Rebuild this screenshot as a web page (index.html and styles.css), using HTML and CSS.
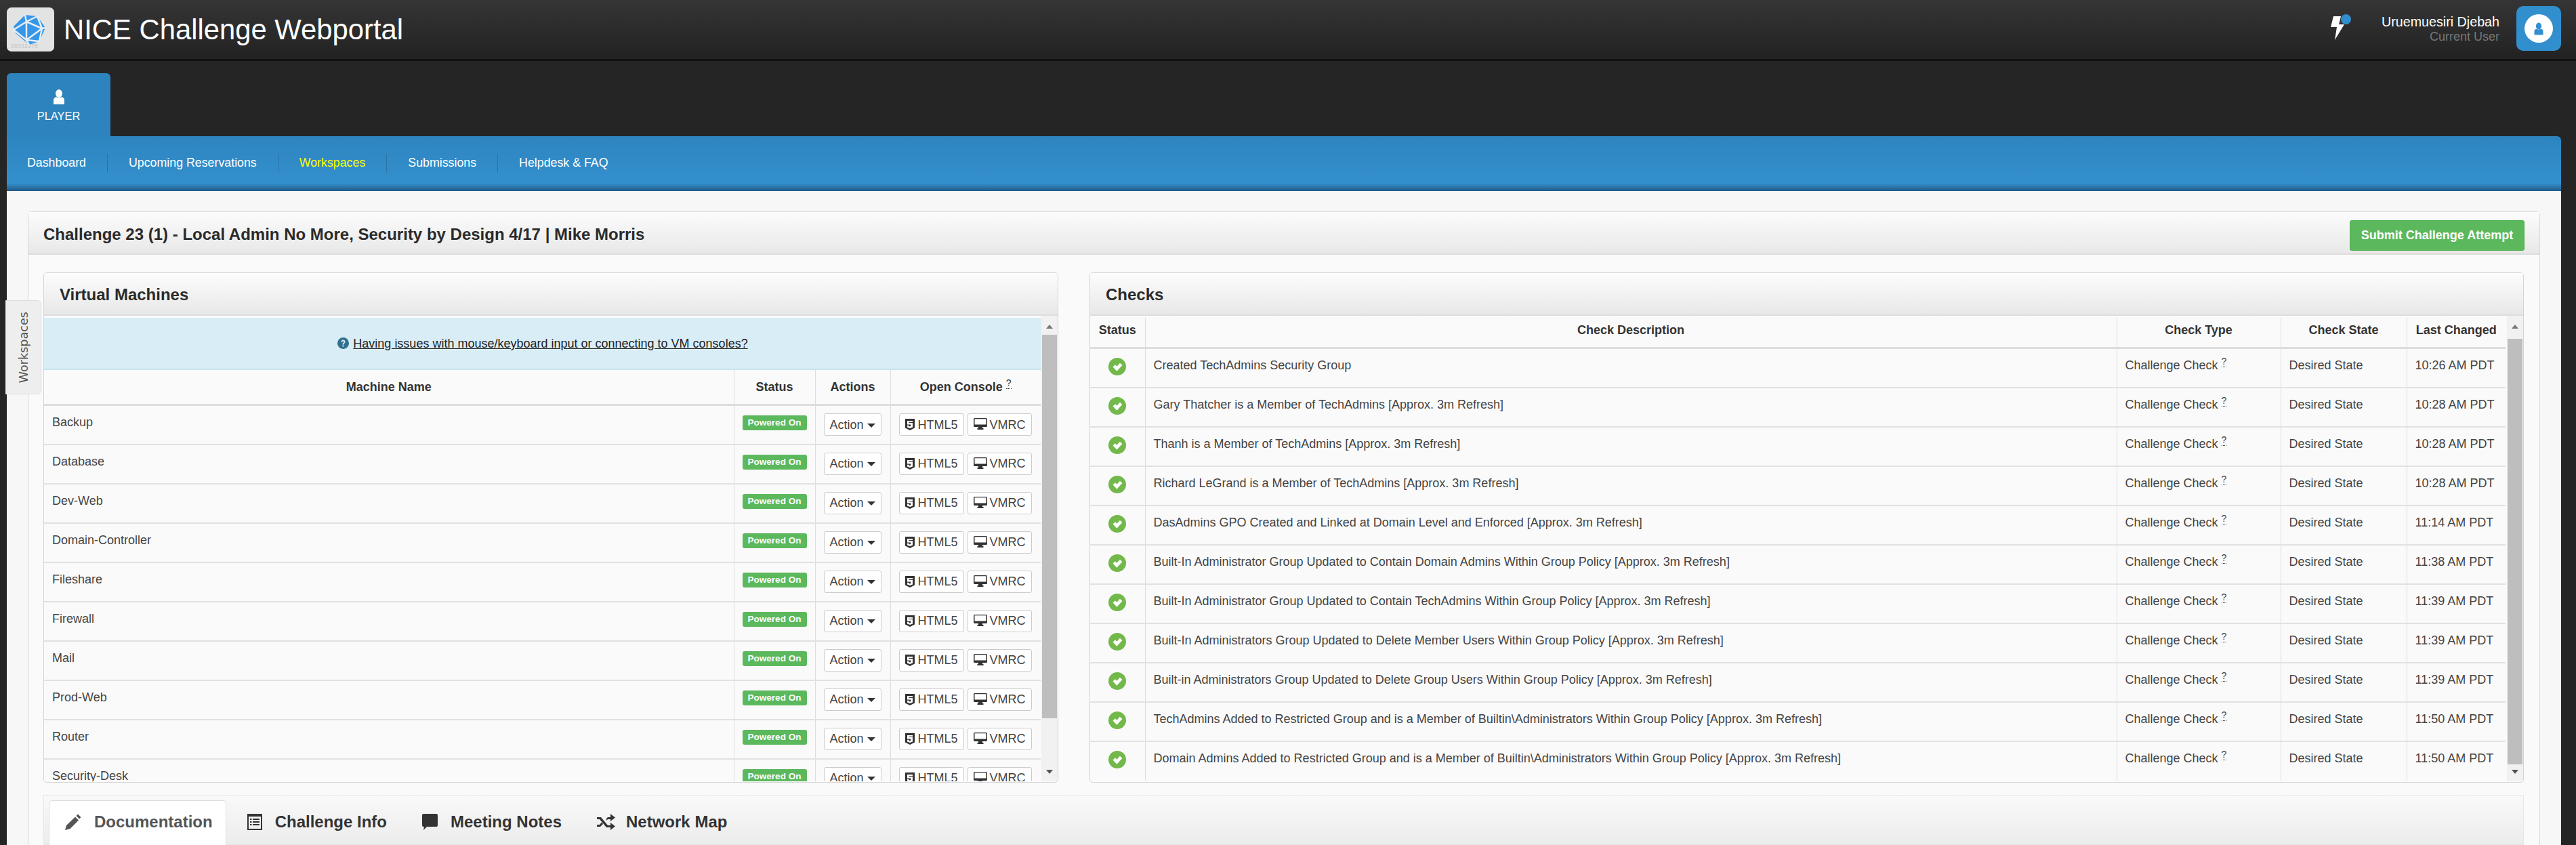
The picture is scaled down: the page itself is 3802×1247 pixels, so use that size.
FILE: index.html
```html
<!DOCTYPE html>
<html>
<head>
<meta charset="utf-8" />
<title>NICE Challenge Webportal</title>
<link rel="stylesheet" href="styles.css">
</head>
<body>
<svg class="sprite" width="0" height="0">
  <symbol id="i-user" viewBox="0 0 22 22"><ellipse cx="11" cy="6" rx="5" ry="6"/><path d="M7 11c1 1.500 7 1.500 8 0 3 1 4 2.500 4 5v5c0 .6-.4 1-1 1H4c-.6 0-1-.4-1-1v-5c0-2.500 1-4 4-5z"/></symbol>
  <symbol id="i-html5" viewBox="0 0 14 17"><path fill-rule="evenodd" d="M0 0h14v13.500L7 17l-7-3.500zM3 3v5.500h5.200v2.300L7 11.400l-1.600-.6V9.700H3v2.700l4 1.700 4-1.700V6H5.400V5H11V3z"/></symbol>
  <symbol id="i-screen" viewBox="0 0 20 17"><path fill-rule="evenodd" d="M1.500 0h17A1.500 1.500 0 0 1 20 1.500v10a1.500 1.500 0 0 1-1.500 1.500H13v2h1.500v2h-9v-2H7v-2H1.500A1.500 1.500 0 0 1 0 11.500v-10A1.500 1.500 0 0 1 1.500 0zM1.500 1.300V9.500h17V1.300z"/></symbol>
  <symbol id="i-check" viewBox="0 0 26 26"><circle cx="13" cy="13" r="13" fill="#72b84a"/><path d="M6.500 13.500l3.500-3.300 2.400 2.500 4.500-5 3.500 3.200-8 8.800z" fill="#fff"/></symbol>
</svg>

<header class="topbar">
  <svg class="logo" viewBox="0 0 70 65">
    <rect width="70" height="65" rx="7" fill="#e2e4e3"/>
    <text class="logo-noise" x="6" y="60">29332278</text>
    <path d="M27 11l18 2 12 17-9 20-15 5-20-17-3-10z" fill="#3597ea"/>
    <path d="M29 21V48L52 31zM29 21L27 11M29 21L45 13M29 21L10 33M29 48L10 33M29 48L33 55M29 48L48 50M52 31L57 30M52 31L45 13M52 31L48 50" stroke="#e8eef3" stroke-width="2.500" fill="none"/>
  </svg>
  <h1 class="brand">NICE Challenge Webportal</h1>
  <div class="top-right">
    <div class="bolt">
      <svg viewBox="0 0 20 35" width="20" height="35"><path d="M4 0h11l-3 12h8L6 35l3-19H0z" fill="#fff"/></svg>
      <span class="bolt-dot"></span>
    </div>
    <div class="who">
      <div class="who-name">Uruemuesiri Djebah</div>
      <div class="who-role">Current User</div>
    </div>
    <div class="avatar"><span class="avatar-face"><svg width="18" height="19" fill="#328fce"><use href="#i-user"/></svg></span></div>
  </div>
</header>

<div class="role-tabs">
  <a class="role-tab">
    <svg width="22" height="22" fill="#fff"><use href="#i-user"/></svg>
    <span>PLAYER</span>
  </a>
</div>

<nav class="subnav">
  <a>Dashboard</a>
  <a>Upcoming Reservations</a>
  <a class="current">Workspaces</a>
  <a>Submissions</a>
  <a>Helpdesk &amp; FAQ</a>
</nav>

<main class="content">
  <div class="side-tab"><span>Workspaces</span></div>

  <section class="main-panel">
    <div class="main-head">
      <h2>Challenge 23 (1) - Local Admin No More, Security by Design 4/17 | Mike Morris</h2>
      <a class="btn-submit">Submit Challenge Attempt</a>
    </div>
    <div class="main-body">
      <div class="panels">
        <section class="panel">
          <h3 class="panel-head">Virtual Machines</h3>
          <div class="panel-body">
            <div class="scroll-area">
              <div class="vm-alert">
                <svg width="17" height="17" viewBox="0 0 17 17"><circle cx="8.500" cy="8.500" r="8.500" fill="#31708f"/><path d="M5.500 6.500c0-4 6-4 6 0 0 2-2 2-2 4H7.500c0-2.500 2-2.500 2-4 0-1.300-2-1.300-2 0zM7.500 11.500h2v2h-2z" fill="#d9edf7"/></svg>
                <a>Having issues with mouse/keyboard input or connecting to VM consoles?</a>
              </div>
              <table class="grid vm-grid">
                <colgroup><col class="c-name"><col class="c-status"><col class="c-actions"><col class="c-console"></colgroup>
                <thead><tr><th>Machine Name</th><th>Status</th><th>Actions</th><th>Open Console <sup class="hint">?</sup></th></tr></thead>
                <tbody>
                  <tr><td>Backup</td><td><span class="badge">Powered On</span></td><td><a class="btn">Action <i class="caret"></i></a></td><td><div class="btns"><a class="btn"><svg class="ic-h" width="14" height="17" fill="#333"><use href="#i-html5"/></svg>HTML5</a><a class="btn"><svg class="ic-s" width="20" height="17" fill="#333"><use href="#i-screen"/></svg>VMRC</a></div></td></tr>
                  <tr><td>Database</td><td><span class="badge">Powered On</span></td><td><a class="btn">Action <i class="caret"></i></a></td><td><div class="btns"><a class="btn"><svg class="ic-h" width="14" height="17" fill="#333"><use href="#i-html5"/></svg>HTML5</a><a class="btn"><svg class="ic-s" width="20" height="17" fill="#333"><use href="#i-screen"/></svg>VMRC</a></div></td></tr>
                  <tr><td>Dev-Web</td><td><span class="badge">Powered On</span></td><td><a class="btn">Action <i class="caret"></i></a></td><td><div class="btns"><a class="btn"><svg class="ic-h" width="14" height="17" fill="#333"><use href="#i-html5"/></svg>HTML5</a><a class="btn"><svg class="ic-s" width="20" height="17" fill="#333"><use href="#i-screen"/></svg>VMRC</a></div></td></tr>
                  <tr><td>Domain-Controller</td><td><span class="badge">Powered On</span></td><td><a class="btn">Action <i class="caret"></i></a></td><td><div class="btns"><a class="btn"><svg class="ic-h" width="14" height="17" fill="#333"><use href="#i-html5"/></svg>HTML5</a><a class="btn"><svg class="ic-s" width="20" height="17" fill="#333"><use href="#i-screen"/></svg>VMRC</a></div></td></tr>
                  <tr><td>Fileshare</td><td><span class="badge">Powered On</span></td><td><a class="btn">Action <i class="caret"></i></a></td><td><div class="btns"><a class="btn"><svg class="ic-h" width="14" height="17" fill="#333"><use href="#i-html5"/></svg>HTML5</a><a class="btn"><svg class="ic-s" width="20" height="17" fill="#333"><use href="#i-screen"/></svg>VMRC</a></div></td></tr>
                  <tr><td>Firewall</td><td><span class="badge">Powered On</span></td><td><a class="btn">Action <i class="caret"></i></a></td><td><div class="btns"><a class="btn"><svg class="ic-h" width="14" height="17" fill="#333"><use href="#i-html5"/></svg>HTML5</a><a class="btn"><svg class="ic-s" width="20" height="17" fill="#333"><use href="#i-screen"/></svg>VMRC</a></div></td></tr>
                  <tr><td>Mail</td><td><span class="badge">Powered On</span></td><td><a class="btn">Action <i class="caret"></i></a></td><td><div class="btns"><a class="btn"><svg class="ic-h" width="14" height="17" fill="#333"><use href="#i-html5"/></svg>HTML5</a><a class="btn"><svg class="ic-s" width="20" height="17" fill="#333"><use href="#i-screen"/></svg>VMRC</a></div></td></tr>
                  <tr><td>Prod-Web</td><td><span class="badge">Powered On</span></td><td><a class="btn">Action <i class="caret"></i></a></td><td><div class="btns"><a class="btn"><svg class="ic-h" width="14" height="17" fill="#333"><use href="#i-html5"/></svg>HTML5</a><a class="btn"><svg class="ic-s" width="20" height="17" fill="#333"><use href="#i-screen"/></svg>VMRC</a></div></td></tr>
                  <tr><td>Router</td><td><span class="badge">Powered On</span></td><td><a class="btn">Action <i class="caret"></i></a></td><td><div class="btns"><a class="btn"><svg class="ic-h" width="14" height="17" fill="#333"><use href="#i-html5"/></svg>HTML5</a><a class="btn"><svg class="ic-s" width="20" height="17" fill="#333"><use href="#i-screen"/></svg>VMRC</a></div></td></tr>
                  <tr><td>Security-Desk</td><td><span class="badge">Powered On</span></td><td><a class="btn">Action <i class="caret"></i></a></td><td><div class="btns"><a class="btn"><svg class="ic-h" width="14" height="17" fill="#333"><use href="#i-html5"/></svg>HTML5</a><a class="btn"><svg class="ic-s" width="20" height="17" fill="#333"><use href="#i-screen"/></svg>VMRC</a></div></td></tr>
                </tbody>
              </table>
            </div>
            <div class="scrollbar vm-bar"><i class="arrow-up"></i><b class="thumb"></b><i class="arrow-down"></i></div>
          </div>
        </section>

        <section class="panel">
          <h3 class="panel-head">Checks</h3>
          <div class="panel-body">
            <div class="scroll-area">
              <table class="grid check-grid">
                <colgroup><col class="k-status"><col class="k-desc"><col class="k-type"><col class="k-state"><col class="k-time"></colgroup>
                <thead><tr><th>Status</th><th>Check Description</th><th>Check Type</th><th>Check State</th><th>Last Changed</th></tr></thead>
                <tbody>
                  <tr><td class="ok"><svg width="26" height="26"><use href="#i-check"/></svg></td><td>Created TechAdmins Security Group</td><td>Challenge Check <sup class="hint">?</sup></td><td>Desired State</td><td>10:26 AM PDT</td></tr>
                  <tr><td class="ok"><svg width="26" height="26"><use href="#i-check"/></svg></td><td>Gary Thatcher is a Member of TechAdmins [Approx. 3m Refresh]</td><td>Challenge Check <sup class="hint">?</sup></td><td>Desired State</td><td>10:28 AM PDT</td></tr>
                  <tr><td class="ok"><svg width="26" height="26"><use href="#i-check"/></svg></td><td>Thanh is a Member of TechAdmins [Approx. 3m Refresh]</td><td>Challenge Check <sup class="hint">?</sup></td><td>Desired State</td><td>10:28 AM PDT</td></tr>
                  <tr><td class="ok"><svg width="26" height="26"><use href="#i-check"/></svg></td><td>Richard LeGrand is a Member of TechAdmins [Approx. 3m Refresh]</td><td>Challenge Check <sup class="hint">?</sup></td><td>Desired State</td><td>10:28 AM PDT</td></tr>
                  <tr><td class="ok"><svg width="26" height="26"><use href="#i-check"/></svg></td><td>DasAdmins GPO Created and Linked at Domain Level and Enforced [Approx. 3m Refresh]</td><td>Challenge Check <sup class="hint">?</sup></td><td>Desired State</td><td>11:14 AM PDT</td></tr>
                  <tr><td class="ok"><svg width="26" height="26"><use href="#i-check"/></svg></td><td>Built-In Administrator Group Updated to Contain Domain Admins Within Group Policy [Approx. 3m Refresh]</td><td>Challenge Check <sup class="hint">?</sup></td><td>Desired State</td><td>11:38 AM PDT</td></tr>
                  <tr><td class="ok"><svg width="26" height="26"><use href="#i-check"/></svg></td><td>Built-In Administrator Group Updated to Contain TechAdmins Within Group Policy [Approx. 3m Refresh]</td><td>Challenge Check <sup class="hint">?</sup></td><td>Desired State</td><td>11:39 AM PDT</td></tr>
                  <tr><td class="ok"><svg width="26" height="26"><use href="#i-check"/></svg></td><td>Built-In Administrators Group Updated to Delete Member Users Within Group Policy [Approx. 3m Refresh]</td><td>Challenge Check <sup class="hint">?</sup></td><td>Desired State</td><td>11:39 AM PDT</td></tr>
                  <tr><td class="ok"><svg width="26" height="26"><use href="#i-check"/></svg></td><td>Built-in Administrators Group Updated to Delete Group Users Within Group Policy [Approx. 3m Refresh]</td><td>Challenge Check <sup class="hint">?</sup></td><td>Desired State</td><td>11:39 AM PDT</td></tr>
                  <tr><td class="ok"><svg width="26" height="26"><use href="#i-check"/></svg></td><td>TechAdmins Added to Restricted Group and is a Member of Builtin\Administrators Within Group Policy [Approx. 3m Refresh]</td><td>Challenge Check <sup class="hint">?</sup></td><td>Desired State</td><td>11:50 AM PDT</td></tr>
                  <tr><td class="ok"><svg width="26" height="26"><use href="#i-check"/></svg></td><td>Domain Admins Added to Restricted Group and is a Member of Builtin\Administrators Within Group Policy [Approx. 3m Refresh]</td><td>Challenge Check <sup class="hint">?</sup></td><td>Desired State</td><td>11:50 AM PDT</td></tr>
                </tbody>
              </table>
            </div>
            <div class="scrollbar check-bar"><i class="arrow-up"></i><b class="thumb"></b><i class="arrow-down"></i></div>
          </div>
        </section>
      </div>

      <ul class="doc-tabs">
        <li class="active"><svg width="24" height="24" viewBox="0 0 24 24" fill="#555"><path d="M0 24l2-7L15 4.500l5 5L7.500 22zM16.500 3L19 .5l4.500 4.500L21 7.500z"/></svg>Documentation</li>
        <li><svg width="22" height="24" viewBox="0 0 22 24" fill="#333"><path fill-rule="evenodd" d="M0 0h22v24H0zM2 4v18h18V4zM4 7h2.500v2H4zM8 7h10v2H8zM4 11h2.500v2H4zM8 11h10v2H8zM4 15h2.500v2H4zM8 15h10v2H8z"/></svg>Challenge Info</li>
        <li><svg width="23" height="24" viewBox="0 0 23 24" fill="#333"><path d="M2 0h19a2 2 0 0 1 2 2v15a2 2 0 0 1-2 2H7l-5 5 1-5H2a2 2 0 0 1-2-2V2a2 2 0 0 1 2-2z"/></svg>Meeting Notes</li>
        <li><svg class="ic-net" width="27" height="24" viewBox="0 0 27 24" fill="#333"><path d="M0 5h6l10 12h4v-4l7 5.500-7 5.500v-4h-6L4 8H0zM0 16h4l3-3.500 2 2.500-4 4H0zM14 7l2-2h4V0l7 5.500-7 5.500V8h-4l-2 2z"/></svg>Network Map</li>
      </ul>
    </div>
  </section>
</main>
</body>
</html>
```
FILE: styles.css
```css
html, body {
  margin: 0;
  height: 1247px;
  overflow: hidden;
}

body {
  background: #252525;
  color: #333;
  font-family: "Liberation Sans", Arial, sans-serif;
  font-size: 18px;
  line-height: 20px;
}

.sprite {
  position: absolute;
}

a {
  color: inherit;
}

/* top bar */
.topbar {
  display: flex;
  align-items: center;
  height: 87px;
  padding: 0 22px 0 10px;
  background: linear-gradient(#353535, #222);
  border-bottom: 3px solid #111;
}

.logo {
  width: 70px;
  height: 65px;
}

.logo-noise {
  font-size: 9px;
  fill: #c4c6c6;
}

.brand {
  margin: 0 0 0 14px;
  color: #fff;
  font-size: 41.800px;
  font-weight: normal;
  line-height: 50px;
}

.top-right {
  display: flex;
  align-items: center;
  margin-left: auto;
}

.bolt {
  position: relative;
  display: flex;
  margin-right: 55px;
  margin-top: -5px;
}

.bolt-dot {
  position: absolute;
  top: -3px;
  right: -10px;
  width: 15px;
  height: 15px;
  border-radius: 50%;
  background: #328fce;
}

.who {
  text-align: right;
  margin-right: 25px;
  margin-top: -1px;
}

.who-name {
  color: #fff;
  font-size: 19.700px;
  line-height: 22px;
}

.who-role {
  color: #777;
  line-height: 22px;
}

.avatar {
  display: flex;
  align-items: center;
  justify-content: center;
  width: 66px;
  height: 66px;
  border-radius: 10px;
  background: #328fce;
  margin-top: -3px;
}

.avatar-face {
  display: flex;
  align-items: center;
  justify-content: center;
  width: 42px;
  height: 42px;
  border-radius: 50%;
  background: #fff;
}

/* role tabs and sub navigation */
.role-tabs {
  display: flex;
  padding: 18px 22px 0 10px;
}

.role-tab {
  display: flex;
  flex-direction: column;
  align-items: center;
  width: 153px;
  height: 93px;
  box-sizing: border-box;
  padding-top: 24px;
  border-radius: 6px 6px 0 0;
  background: #2c83bd;
  color: #fff;
  font-size: 16.400px;
}

.role-tab span {
  margin-top: 7px;
}

.subnav {
  display: flex;
  align-items: center;
  height: 81px;
  box-sizing: border-box;
  margin: 0 22px 0 10px;
  border-radius: 0 6px 0 0;
  background: linear-gradient(#2d85bf 0, #348fcd 85%, #348fcd 86%, #1f5a86 100%);
  color: #fff;
  font-size: 17.800px;
}

.subnav a {
  height: 27px;
  line-height: 27px;
  padding: 0 31px;
  border-right: 1px solid #2a72a5;
  margin-top: -2px;
}

.subnav a:first-child {
  padding-left: 30px;
}

.subnav a:last-child {
  border-right: 0;
}

.subnav .current {
  color: #ff0;
}

/* content */
.content {
  position: relative;
  margin: 0 22px 0 10px;
  height: 965px;
  padding: 30px 31px 0;
  box-sizing: border-box;
  background: #f7f7f7;
}

.side-tab {
  position: absolute;
  left: -2px;
  top: 161px;
  width: 53px;
  height: 139px;
  box-sizing: border-box;
  display: flex;
  align-items: center;
  justify-content: center;
  background: #eee;
  border: 1px solid #ddd;
  border-radius: 0 6px 6px 0;
  color: #555;
}

.side-tab span {
  font-family: "DejaVu Sans", Verdana, sans-serif;
  font-size: 17.600px;
  writing-mode: vertical-rl;
  transform: rotate(180deg);
}

.main-panel {
  height: 934px;
  border: 1px solid #d8d8d8;
  border-bottom: 0;
  border-radius: 5px 5px 0 0;
  background: #fafafa;
}

.main-head {
  display: flex;
  align-items: center;
  justify-content: space-between;
  height: 61px;
  padding: 0 22px;
  border-bottom: 2px solid #ddd;
  background: linear-gradient(#fcfcfc, #e8e8e8);
}

.main-head h2 {
  margin: 0;
  padding-top: 5px;
  font-size: 24px;
  font-weight: bold;
  color: #2b2b2b;
}

.btn-submit {
  width: 258px;
  height: 45px;
  box-sizing: border-box;
  margin-top: 8px;
  border: 1px solid #4cae4c;
  border-radius: 3px;
  background: #5cb85c;
  color: #fff;
  font-weight: bold;
  line-height: 43px;
  text-align: center;
}

.main-body {
  padding: 26px 23px 0 22px;
}

.panels {
  display: grid;
  grid-template-columns: 1498px 2117px;
  column-gap: 46px;
}

.panel {
  height: 753px;
  box-sizing: border-box;
  border: 1px solid #d4d4d4;
  border-radius: 5px;
  background: #fafafa;
  overflow: hidden;
}

.panel-head {
  margin: 0;
  height: 61px;
  padding-left: 23px;
  border-bottom: 2px solid #ddd;
  background: linear-gradient(#fcfcfc, #e8e8e8);
  font-size: 24px;
  font-weight: bold;
  line-height: 64px;
  color: #2b2b2b;
}

.panel-body {
  display: flex;
  height: 688px;
}

.scroll-area {
  flex: 1;
  height: 684px;
  margin-top: 3px;
  overflow: hidden;
}

.vm-alert {
  display: flex;
  align-items: center;
  justify-content: center;
  gap: 6px;
  height: 77px;
  box-sizing: border-box;
  background: #d9edf7;
  border-bottom: 2px solid #c8e2ec;
  color: #222;
}

.vm-alert a {
  text-decoration: underline;
}

.grid {
  table-layout: fixed;
  border-collapse: collapse;
  color: #444;
}

.vm-grid {
  width: 1471px;
}

.check-grid {
  width: 2089px;
}

.c-name { width: 1018px; }
.c-status { width: 120px; }
.c-actions { width: 111px; }
.c-console { width: 222px; }

.k-status { width: 81px; }
.k-desc { width: 1434px; }
.k-type { width: 242px; }
.k-state { width: 186px; }
.k-time { width: 146px; }

.grid th {
  padding: 15px 8px;
  color: #333;
  font-weight: bold;
  text-align: center;
  border-left: 1px solid #ddd;
  border-bottom: 3px solid #ddd;
}

.check-grid th {
  padding: 8px 8px 15px;
  white-space: nowrap;
}

.grid th:first-child,
.grid td:first-child {
  border-left: 0;
}

.grid td {
  height: 58px;
  box-sizing: border-box;
  padding: 14px 12px 0;
  vertical-align: top;
  white-space: nowrap;
  border-left: 1px solid #ddd;
  border-top: 2px solid #e1e1e1;
}

.grid tbody tr:first-child td {
  border-top: 0;
}

.hint {
  font-size: 14px;
  font-weight: normal;
  line-height: 0;
  border-bottom: 1px dotted #333;
}

.badge {
  display: block;
  width: 95px;
  height: 22px;
  border-radius: 3px;
  background: #5cb85c;
  color: #fff;
  font-size: 13.500px;
  font-weight: bold;
  line-height: 21px;
  text-align: center;
}

.btn {
  display: inline-flex;
  align-items: center;
  justify-content: center;
  height: 33px;
  box-sizing: border-box;
  margin-top: -3px;
  padding: 0 8px;
  border: 1px solid #ccc;
  border-radius: 3px;
  background: #fff;
  color: #444;
}

.btns {
  display: flex;
  gap: 5px;
}

.ic-h {
  margin-right: 5px;
}

.ic-s {
  margin-right: 4px;
  margin-top: -2px;
}

.caret {
  width: 0;
  height: 0;
  margin-left: 5px;
  margin-top: 2px;
  border-top: 6px solid #333;
  border-left: 6px solid transparent;
  border-right: 6px solid transparent;
}

.ok {
  text-align: center;
}

.grid td.ok {
  padding: 13px 0 0;
}

.ok svg {
  display: block;
  margin: 0 auto;
}

/* fake scrollbars */
.scrollbar {
  display: flex;
  flex-direction: column;
  align-items: center;
  width: 24px;
  height: 687px;
  box-sizing: border-box;
  background: #f1f1f1;
}

.thumb {
  width: 22px;
  background: #bebebe;
}

.vm-bar .thumb {
  height: 566px;
  margin-top: 9px;
}

.check-bar .thumb {
  height: 628px;
  margin-top: 15px;
}

.arrow-up {
  margin-top: 13px;
  width: 0;
  height: 0;
  border-bottom: 6px solid #777;
  border-left: 5.500px solid transparent;
  border-right: 5.500px solid transparent;
}

.arrow-down {
  margin-top: auto;
  margin-bottom: 11px;
  width: 0;
  height: 0;
  border-top: 6px solid #555;
  border-left: 5.500px solid transparent;
  border-right: 5.500px solid transparent;
}

/* documentation tabs */
.doc-tabs {
  display: flex;
  height: 74px;
  box-sizing: border-box;
  margin: 18px 0 0 0;
  padding: 7px 0 0 7px;
  list-style: none;
  border: 1px solid #e6e6e6;
  background: linear-gradient(#f9f9f9, #ececec);
  font-size: 24px;
  font-weight: bold;
  color: #333;
}

.doc-tabs li {
  display: flex;
  align-items: center;
  gap: 19px;
  height: 66px;
  box-sizing: border-box;
  padding: 0 21px 3px 31px;
}

.doc-tabs .active {
  background: #fff;
  border: 1px solid #ddd;
  border-bottom: 0;
  border-radius: 5px 5px 0 0;
  padding: 0 19px 3px 23px;
  color: #555;
}

.ic-net {
  margin-right: -3px;
}
```
